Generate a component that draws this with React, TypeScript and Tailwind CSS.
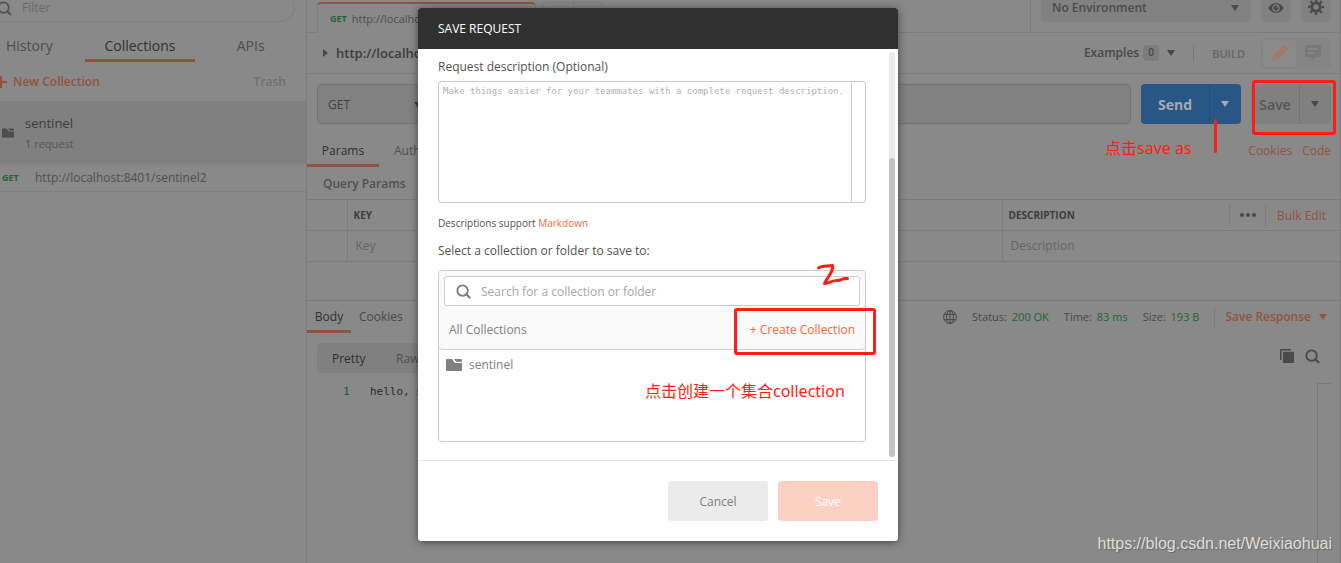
import React from "react";

function Caret({ className = "" }: { className?: string }) {
  return (
    <svg viewBox="0 0 8 6" className={`h-[6px] w-[8px] shrink-0 fill-current ${className}`} aria-hidden="true">
      <path d="M0 0h8L4 6z" />
    </svg>
  );
}

function SearchIcon({ className = "" }: { className?: string }) {
  return (
    <svg viewBox="0 0 16 16" className={`shrink-0 ${className}`} fill="none" stroke="currentColor" aria-hidden="true">
      <circle cx="7" cy="7" r="5.600" strokeWidth="2" />
      <path d="M11 11l4 4" strokeWidth="2.400" />
    </svg>
  );
}

function FolderIcon({ className = "" }: { className?: string }) {
  return (
    <svg viewBox="0 0 16 12" className={`shrink-0 fill-current ${className}`} aria-hidden="true">
      <path d="M0 1q0-1 1-1h5l3 4h7v7q0 1-1 1H1q-1 0-1-1z" />
      <path d="M8 0h7q1 0 1 1v1.700H10z" />
    </svg>
  );
}

function Sidebar() {
  return (
    <aside className="flex w-[307px] shrink-0 flex-col overflow-hidden border-r border-[#7b7b7b]">
      <div className="-mt-2 -ml-6 mr-[11px] flex h-[30px] items-center gap-[10px] rounded-full border border-[#7f7f7f] pt-[2px] pl-[20px]">
        <SearchIcon className="h-[15px] w-[15px] text-[#555]" />
        <input
          aria-label="Filter"
          placeholder="Filter"
          className="min-w-0 flex-1 bg-transparent text-xs outline-none placeholder:text-[#686868]"
        />
      </div>
      <nav className="-ml-[26px] grid grid-cols-3 text-sm text-[#4d4d4d]">
        <button className="h-10 border-b-3 border-transparent pt-[10px]">History</button>
        <button className="h-10 border-b-3 border-[#91533f] pt-[10px] text-[#2f2f2f]">Collections</button>
        <button className="h-10 border-b-3 border-transparent pt-[10px]">APIs</button>
      </nav>
      <div className="flex h-[39px] items-center justify-between pt-px pr-5 text-xs font-semibold">
        <button className="flex items-center gap-[6px] text-[#91533f]">
          <svg viewBox="0 0 12 12" className="-ml-[5px] h-3 w-3" aria-hidden="true">
            <path d="M6 0v12M0 6h12" stroke="currentColor" strokeWidth="2.200" />
          </svg>
          New Collection
        </button>
        <button className="text-[#707070]">Trash</button>
      </div>
      <div className="flex h-[62px] items-center gap-[11px] bg-[#808080] pt-[2px] pl-[2px]">
        <FolderIcon className="h-[10px] w-[12px] text-[#4c4c4c]" />
        <div>
          <div className="text-[13px] leading-5 text-[#3c3c3c]">sentinel</div>
          <div className="pt-px text-[11px] leading-5 text-[#555]">1 request</div>
        </div>
      </div>
      <div className="flex h-[29px] items-center border-b border-[#7f7f7f] bg-linear-to-b from-[#838383] to-[#898989] to-20% pt-[2px]">
        <span className="w-[35px] pl-[2px] text-[9px] font-bold text-[#1f6339]">GET</span>
        <span className="text-xs text-[#505050]">http://localhost:8401/sentinel2</span>
      </div>
    </aside>
  );
}

function TabStrip() {
  return (
    <div className="flex h-[33px]">
      <div className="w-[10px] border-b border-[#7d7d7d]" />
      <div className="flex h-[31px] w-[219px] items-center gap-[5px] self-end rounded-t border-x border-t-2 border-x-[#7d7d7d] border-t-[#91533f] pt-px pl-3">
        <span className="text-[9px] font-bold text-[#1f6339]">GET</span>
        <span className="text-[11px] text-[#4c4c4c]">http://localhost:8401/sentinel2</span>
      </div>
      <div className="flex flex-1 items-end border-b border-[#7d7d7d] pl-[7px]">
        <div className="flex h-[30px] w-[60px] rounded border border-[#7d7d7d]">
          <button aria-label="New tab" className="flex-1 border-r border-[#7d7d7d]" />
          <button aria-label="More tabs" className="flex-1" />
        </div>
      </div>
      <div className="flex w-[310px] gap-[10px] border-b border-l border-[#7d7d7d] pl-[10px] text-[#4a4a4a]">
        <button className="-mt-2 flex h-[30px] flex-1 items-center justify-between rounded bg-[#818181] pt-[2px] pr-3 pl-[11px] text-xs font-semibold">
          No Environment
          <Caret />
        </button>
        <button aria-label="Environment quick look" className="-mt-2 flex h-[30px] w-[30px] items-center justify-center rounded bg-[#818181] pt-px">
          <svg viewBox="0 0 16 12" className="h-3 w-4" aria-hidden="true">
            <path d="M8 1C4.500 1 1.800 3.200.3 6c1.500 2.800 4.200 5 7.700 5s6.200-2.200 7.700-5C14.200 3.200 11.500 1 8 1z" fill="currentColor" />
            <circle cx="8" cy="6" r="3.800" fill="#818181" />
            <circle cx="8" cy="6" r="2.500" fill="currentColor" />
            <circle cx="8.800" cy="5.200" r=".8" fill="#818181" />
          </svg>
        </button>
        <button aria-label="Settings" className="-mt-2 mr-[9px] flex h-[30px] w-[30px] items-center justify-center rounded bg-[#818181]">
          <svg viewBox="0 0 16 16" className="h-4 w-4" fill="none" stroke="currentColor" aria-hidden="true">
            <circle cx="8" cy="8" r="4.200" strokeWidth="3" />
            <circle cx="8" cy="8" r="6.800" strokeWidth="2.200" strokeDasharray="2.670 2.670" strokeDashoffset="1.335" />
          </svg>
        </button>
      </div>
    </div>
  );
}

function TitleRow() {
  return (
    <div className="flex h-[41px] items-center border-b border-[#7b7b7b] pr-[9px] pl-4 text-[#484848]">
      <svg viewBox="0 0 5 8" className="mr-2 h-2 w-[5px] fill-current" aria-hidden="true">
        <path d="M0 0l5 4-5 4z" />
      </svg>
      <h1 className="flex-1 pt-px text-[13px] font-semibold text-[#3c3c3c]">http://localhost:8401/sentinel2</h1>
      <button className="flex items-center gap-1 text-xs font-semibold">
        Examples
        <span className="flex h-4 w-4 items-center justify-center rounded-sm bg-[#7c7c7c] text-[10px]">0</span>
        <Caret className="ml-1" />
      </button>
      <span className="mx-[18px] h-4 border-l border-[#777]" />
      <span className="mr-4 pt-[2px] text-[11px] font-semibold text-[#666]">BUILD</span>
      <div className="flex h-[31px] w-[70px] rounded bg-[#858585] p-[2px]">
        <button aria-label="Edit" className="flex flex-1 items-center justify-center rounded bg-[#8a8a8a] text-[#a37868]">
          <svg viewBox="0 0 16 16" className="h-4 w-4 fill-current" aria-hidden="true">
            <path d="M0 16l.8-4.600 3.800 3.800zM1.500 10.400L9.500 2.400l4.100 4.100-8 8zM10.300 1.600L11.500.4q.8-.7 1.600 0l2.500 2.500q.7.800 0 1.600l-1.200 1.200z" />
          </svg>
        </button>
        <button aria-label="Comments" className="flex flex-1 items-center justify-center text-[#787878]">
          <svg viewBox="0 0 16 16" className="h-4 w-4" aria-hidden="true">
            <path d="M1 0h14q1 0 1 1v10q0 1-1 1h-4l-3 3-3-3H1q-1 0-1-1V1q0-1 1-1z" fill="currentColor" />
            <path d="M3 4h10M3 8h7" stroke="#898989" strokeWidth="1.500" />
          </svg>
        </button>
      </div>
    </div>
  );
}

function UrlRow() {
  return (
    <div className="flex h-10 gap-[10px] pr-[9px] pl-[10px]">
      <div className="flex min-w-0 flex-1 rounded border border-[#747474] bg-[#818181]">
        <button className="flex w-[113px] items-center justify-between border-r border-[#747474] pt-px pr-2 pl-[10px] text-xs text-[#404040]">
          GET
          <Caret />
        </button>
        <input aria-label="Request URL" className="min-w-0 flex-1 bg-transparent px-3 text-xs outline-none" />
      </div>
      <div className="flex w-[100px] overflow-hidden rounded bg-[#285685] text-[#a3abb4]">
        <button className="flex-1 pt-px text-sm font-bold">Send</button>
        <button aria-label="Send options" className="flex w-8 items-center justify-center border-l border-[#214c7a] pr-[2px]">
          <Caret />
        </button>
      </div>
      <div className="flex w-20 overflow-hidden rounded bg-[#808080] text-[#555]">
        <button className="flex-1 pt-px text-sm font-semibold">Save</button>
        <button aria-label="Save options" className="flex w-8 items-center justify-center border-l border-[#737373] pr-[2px] text-[#484848]">
          <Caret />
        </button>
      </div>
    </div>
  );
}

function ParamsTable() {
  return (
    <table className="w-full table-fixed border-collapse text-left text-xs">
      <colgroup>
        <col className="w-10" />
        <col />
        <col />
        <col className="w-[338px]" />
      </colgroup>
      <thead>
        <tr className="h-[31px] border-y border-[#7b7b7b] text-[10px] text-[#3c3c3c]">
          <th className="border-r border-[#7b7b7b]" />
          <th className="border-r border-[#7b7b7b] pt-[2px] pl-[6px] font-bold">KEY</th>
          <th className="border-r border-[#7b7b7b] pt-[2px] pl-[6px] font-bold">VALUE</th>
          <th className="py-0 pl-[6px] font-bold">
            <div className="flex items-center">
              <span className="flex-1 pt-[2px]">DESCRIPTION</span>
              <button aria-label="Columns" className="flex h-[22px] w-[37px] items-center justify-center border-x border-[#7b7b7b]">
                <svg viewBox="0 0 16 4" className="h-1 w-4 fill-[#484848]" aria-hidden="true">
                  <circle cx="2" cy="2" r="2" />
                  <circle cx="8" cy="2" r="2" />
                  <circle cx="14" cy="2" r="2" />
                </svg>
              </button>
              <button className="mr-[14px] ml-[11px] pt-[2px] text-xs font-normal text-[#91533f]">Bulk Edit</button>
            </div>
          </th>
        </tr>
      </thead>
      <tbody>
        <tr className="h-[31px] border-b border-[#7b7b7b] text-[#656565]">
          <td className="border-r border-[#7b7b7b]" />
          <td className="border-r border-[#7b7b7b] pl-2">Key</td>
          <td className="border-r border-[#7b7b7b] pl-2">Value</td>
          <td className="pl-2">Description</td>
        </tr>
      </tbody>
    </table>
  );
}

function ResponseBar() {
  return (
    <div className="flex h-[33px] items-center border-t border-[#7b7b7b] pr-[13px] text-xs text-[#484848]">
      <button className="h-full w-11 border-b-3 border-[#91533f] pt-[3px] text-[#303030]">Body</button>
      <button className="ml-2">Cookies</button>
      <div className="ml-auto flex items-center gap-[15px] text-[11px]">
        <svg viewBox="0 0 14 14" className="h-[14px] w-[14px]" fill="none" stroke="currentColor" strokeWidth="1" aria-hidden="true">
          <circle cx="7" cy="7" r="6.400" />
          <ellipse cx="7" cy="7" rx="3.400" ry="6.400" />
          <path d="M1.300 4.400h11.400M1.300 9.600h11.400M7 .6v12.800" />
        </svg>
        <span>Status: <span className="ml-[2px] text-[#1f6339]">200 OK</span></span>
        <span>Time: <span className="ml-[2px] text-[#1f6339]">83 ms</span></span>
        <span>Size: <span className="ml-[2px] text-[#1f6339]">193 B</span></span>
        <span className="h-5 border-l border-[#7b7b7b]" />
      </div>
      <button className="ml-[10px] flex items-center gap-2 font-semibold text-[#91533f]">
        Save Response
        <Caret />
      </button>
    </div>
  );
}

function Workspace() {
  return (
    <main className="flex min-w-0 flex-1 flex-col border-r border-[#7b7b7b]">
      <TabStrip />
      <TitleRow />
      <div className="h-[10px]" />
      <UrlRow />
      <div className="flex h-[43px] text-xs text-[#505050]">
        <button className="w-[72px] border-b-3 border-[#91533f] pt-[14px] text-[#2f2f2f]">Params</button>
        <button className="border-b-3 border-transparent pt-[14px] pl-[15px]">Authorization</button>
        <div className="ml-auto flex items-center gap-[10px] pt-[11px] pr-[9px] text-[#91533f]">
          <a href="#cookies">Cookies</a>
          <a href="#code">Code</a>
        </div>
      </div>
      <h2 className="flex h-8 items-center pt-[2px] pl-4 text-xs font-semibold text-[#505050]">Query Params</h2>
      <ParamsTable />
      <div className="h-[38px]" />
      <ResponseBar />
      <div className="flex items-center justify-between pt-[10px] pr-5 pl-[10px]">
        <div className="flex h-[30px] w-[240px] items-center rounded bg-[#808080] pt-[2px] pl-[15px] text-xs text-[#505050]">
          <button className="w-16 text-left text-[#303030]">Pretty</button>
          <button>Raw</button>
        </div>
        <div className="flex items-center gap-[11px] pb-[4px] text-[#4a4a4a]">
          <svg viewBox="0 0 14 14" className="h-[14px] w-[14px] fill-current" aria-hidden="true">
            <path d="M0 0h11v1.600H1.600V11H0z" />
            <path d="M3 3.500q0-.8.800-.8h9.400q.8 0 .8.800v9.700q0 .8-.8.800H3.800q-.8 0-.8-.8z" />
          </svg>
          <SearchIcon className="h-[15px] w-[15px]" />
        </div>
      </div>
      <div className="flex flex-1 pt-[10px] pr-[9px] font-['DejaVu_Sans_Mono',monospace] text-[11px]">
        <span className="w-[63px] pt-px pl-9 text-[#27505c]">1</span>
        <code className="flex-1 pt-px font-[inherit] text-[#2b2b2b]">hello, sentinel</code>
        <span className="w-[14px] border-t border-l border-[#777]" />
      </div>
    </main>
  );
}

function SaveDialog() {
  return (
    <section
      role="dialog"
      aria-label="Save request"
      className="absolute top-2 left-[418px] flex w-[480px] flex-col overflow-hidden rounded-[3px] bg-white text-xs text-[#505050] shadow-[0_1px_8px_rgba(0,0,0,0.5)]"
    >
      <header className="flex h-[41px] items-center bg-[#303030] px-5 text-white">SAVE REQUEST</header>
      <div className="flex border-b border-[#e6e6e6]">
        <div className="flex-1 pt-[9px] pb-[18px] pl-5">
          <label htmlFor="description" className="block h-[23px] leading-[18px]">
            Request description (Optional)
          </label>
          <div className="flex h-[122px] rounded-[3px] border border-[#ccc]">
            <textarea
              id="description"
              placeholder="Make things easier for your teammates with a complete request description."
              className="min-w-0 flex-1 resize-none overflow-hidden pt-[3px] pl-1 font-['DejaVu_Sans_Mono',monospace] text-[9px] leading-3 outline-none placeholder:text-[#b0b0b0]"
            />
            <span className="w-[14px] border-l border-[#ccc]" />
          </div>
          <p className="mt-[11px] text-[10px] leading-[18px]">
            Descriptions support{" "}
            <a href="#markdown" className="text-[#f26b3a]">
              Markdown
            </a>
          </p>
          <p className="mt-[10px] leading-[18px]">Select a collection or folder to save to:</p>
          <div className="mt-[10px] h-[172px] rounded border border-[#ccc]">
            <div className="rounded border-b border-[#ccc] bg-[#fafafa] p-[5px] pb-0">
              <div className="flex h-[30px] items-center gap-[10px] rounded-[3px] border border-[#ccc] bg-white pl-[11px]">
                <SearchIcon className="h-[15px] w-[15px] text-[#7a7a7a]" />
                <input
                  aria-label="Search for a collection or folder"
                  placeholder="Search for a collection or folder"
                  className="min-w-0 flex-1 pt-[2px] outline-none placeholder:text-[#a6a6a6]"
                />
              </div>
              <div className="flex h-[43px] items-center justify-between px-[5px] pt-1 text-[#808080]">
                All Collections
                <button className="text-[#f26b3a]">+ Create Collection</button>
              </div>
            </div>
            <button className="flex h-[30px] items-center gap-[7px] pl-[7px] text-[#808080]">
              <FolderIcon className="h-3 w-4 text-[#808080]" />
              sentinel
            </button>
          </div>
        </div>
        <div className="flex w-8 justify-end pt-[3px] pr-[3px] pb-[3px]">
          <div className="flex w-[6px] flex-col justify-end rounded-full bg-[#ebebeb]">
            <div className="h-[299px] rounded-full bg-[#c3c3c3]" />
          </div>
        </div>
      </div>
      <footer className="flex h-20 items-center justify-end gap-[10px] px-5">
        <button className="h-10 w-[100px] rounded-[3px] bg-[#ebebeb] pt-[2px] text-[#808080]">Cancel</button>
        <button className="h-10 w-[100px] rounded-[3px] bg-[#fcd0c3] pt-[2px] text-white">Save</button>
      </footer>
    </section>
  );
}

function Annotations() {
  return (
    <div className="pointer-events-none absolute inset-0 font-['Noto_Sans','Noto_Sans_CJK_SC',sans-serif] text-base leading-6 text-[#ff1e12]">
      <div className="absolute top-[80px] left-[1252px] h-[55px] w-[84px] rounded-[3px] border-3 border-[#ff1e12]" />
      <div className="absolute top-[308px] left-[734px] h-[47px] w-[142px] rounded-[3px] border-3 border-[#ff1e12]" />
      <svg viewBox="0 0 36 24" className="absolute top-[262px] left-[815px] h-6 w-9" fill="none" stroke="currentColor" strokeWidth="3" strokeLinecap="round" strokeLinejoin="round" aria-hidden="true">
        <path d="M3.500 6C7 3.500 12 4.500 17.500 3.500 19 10 12 15 9.500 21.500 14 21.500 19 17.500 23 18.500 26 18 28 16 32.500 16.500" />
      </svg>
      <div className="absolute top-[119px] left-[1214px] h-[34px] w-[3px] rounded-full bg-[#ff1e12]" />
      <span className="absolute top-[136px] left-[1105px] whitespace-nowrap">点击save as</span>
      <span className="absolute top-[379px] left-[645px] whitespace-nowrap">点击创建一个集合collection</span>
      <span className="absolute right-[9px] bottom-[7px] font-['Liberation_Sans',sans-serif] text-[#dedede] [text-shadow:1px_1px_1px_#666]">
        https://blog.csdn.net/Weixiaohuai
      </span>
    </div>
  );
}

export default function App() {
  return (
    <div className="relative flex min-h-screen overflow-hidden bg-[#898989] font-['Open_Sans',sans-serif]">
      <Sidebar />
      <Workspace />
      <SaveDialog />
      <Annotations />
    </div>
  );
}
